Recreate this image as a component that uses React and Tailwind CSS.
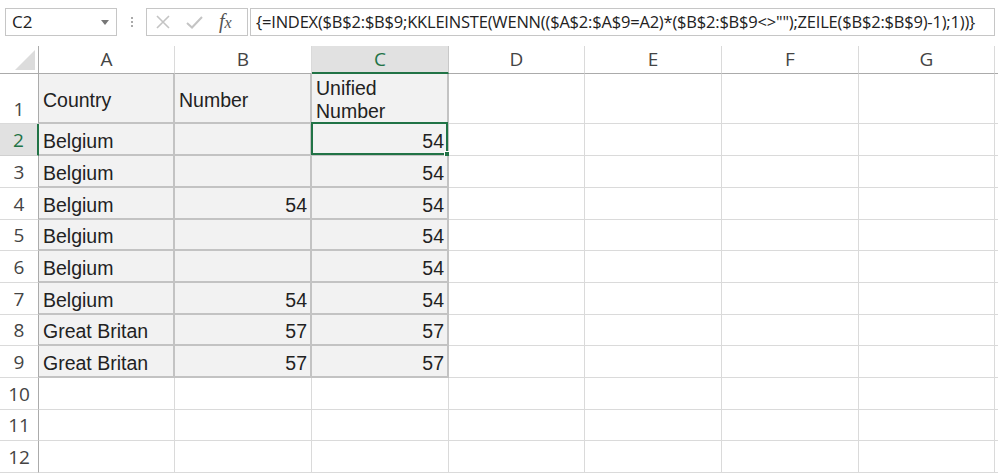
import React from 'react';

const COLS = ['A', 'B', 'C', 'D', 'E', 'F', 'G'];
const WIDTHS = [136, 137, 137, 136, 137, 137, 136];

const rows = [
  { n: 1, h: 50, cells: ['Country', 'Number', 'Unified Number'] },
  { n: 2, h: 32, cells: ['Belgium', '', '54'] },
  { n: 3, h: 32, cells: ['Belgium', '', '54'] },
  { n: 4, h: 32, cells: ['Belgium', '54', '54'] },
  { n: 5, h: 31, cells: ['Belgium', '', '54'] },
  { n: 6, h: 32, cells: ['Belgium', '', '54'] },
  { n: 7, h: 32, cells: ['Belgium', '54', '54'] },
  { n: 8, h: 31, cells: ['Great Britan', '57', '57'] },
  { n: 9, h: 32, cells: ['Great Britan', '57', '57'] },
  { n: 10, h: 32, cells: [] },
  { n: 11, h: 31, cells: [] },
  { n: 12, h: 32, cells: [] },
];

const FORMULA = '{=INDEX($B$2:$B$9;KKLEINSTE(WENN(($A$2:$A$9=A2)*($B$2:$B$9<>"");ZEILE($B$2:$B$9)-1);1))}';

function FormulaBar() {
  return (
    <div className="h-[46px] flex items-start pt-[8px] bg-white" style={{ fontFamily: '"Open Sans", "Noto Sans", sans-serif' }}>
      <div className="ml-[5px] w-[112px] h-[28px] border border-[#c6c6c6] flex items-center justify-between pl-[6px] pr-[7px] text-[17px] text-[#222]">
        <span>C2</span>
        <svg width="8" height="5" viewBox="0 0 8 5"><path d="M0 0 L8 0 L4 5 Z" fill="#777" /></svg>
      </div>
      <div className="w-[29px] h-[28px] flex flex-col items-center justify-center gap-[2px]">
        <span className="w-[2px] h-[2px] bg-[#aaa]" />
        <span className="w-[2px] h-[2px] bg-[#aaa]" />
        <span className="w-[2px] h-[2px] bg-[#aaa]" />
      </div>
      <div className="w-[102px] h-[28px] border border-[#c6c6c6] flex items-center pl-[9px] gap-[16px]">
        <svg width="14" height="14" viewBox="0 0 14 14"><path d="M1 1 L13 13 M13 1 L1 13" stroke="#c4c4c4" strokeWidth="1.6" /></svg>
        <svg width="17" height="14" viewBox="0 0 17 14"><path d="M1 8 L6 12.5 L16 2" stroke="#c4c4c4" strokeWidth="2" fill="none" /></svg>
        <span className="italic text-[#555] text-[20px] leading-none -mt-[3px]" style={{ fontFamily: '"Liberation Serif", serif' }}>
          f<span className="text-[16px]">x</span>
        </span>
      </div>
      <div className="ml-[2px] w-[745px] h-[28px] border border-[#c6c6c6] flex items-center pl-[5px] text-[16.5px] text-[#222] whitespace-nowrap tracking-[-0.2px]">
        {FORMULA}
      </div>
    </div>
  );
}

function HeaderRow() {
  return (
    <div className="flex h-[28px]" style={{ fontFamily: '"Open Sans", "Noto Sans", sans-serif' }}>
      <div className="w-[39px] shrink-0 border-r border-b border-[#ababab] relative">
        <svg className="absolute right-[3px] bottom-[3px]" width="20" height="20" viewBox="0 0 20 20">
          <path d="M20 0 L20 20 L0 20 Z" fill="#dcdcdc" />
        </svg>
      </div>
      {COLS.map((c, i) => {
        const sel = c === 'C';
        return (
          <div
            key={c}
            style={{ width: WIDTHS[i] }}
            className={
              sel
                ? 'shrink-0 flex items-center justify-center bg-[#e1e1e1] text-[#217346] text-[19px] border-r border-[#c8c8c8] border-b-2 border-b-[#217346]'
                : 'shrink-0 flex items-center justify-center text-[#444] text-[19px] border-r border-[#dadada] border-b border-b-[#ababab]'
            }
          >
            {c}
          </div>
        );
      })}
      <div className="flex-1 border-b border-[#ababab]" />
    </div>
  );
}

function Row({ row }) {
  const inTable = row.n <= 9;
  const selRow = row.n === 2;
  return (
    <div className="flex" style={{ height: row.h }}>
      <div
        className={
          (selRow
            ? 'bg-[#e1e1e1] text-[#217346] border-r-2 border-r-[#217346] border-b border-b-[#d0d0d0] '
            : 'text-[#444] border-r border-r-[#ababab] border-b border-b-[#dadada] ') +
          'w-[39px] shrink-0 flex items-end justify-center text-[19px] leading-[28px] ' +
          (row.n === 1 ? 'pb-0' : 'pb-[1px]')
        }
        style={{ fontFamily: '"Open Sans", "Noto Sans", sans-serif' }}
      >
        {row.n}
      </div>
      {COLS.map((c, i) => {
        const tableCell = inTable && i < 3;
        const val = row.cells[i] || '';
        const isNum = /^\d+$/.test(val);
        const isUnified = row.n === 1 && i === 2;
        const selected = row.n === 2 && i === 2;
        return (
          <div
            key={c}
            style={{ width: WIDTHS[i], fontFamily: '"Liberation Sans", Arial, sans-serif' }}
            className={
              (tableCell
                ? 'bg-[#f2f2f2] border-r-2 border-b-2 border-[#c3c3c3] '
                : 'bg-white border-r border-b border-[#dadada] ') +
              'shrink-0 relative flex text-[19.5px] text-[#222] ' +
              (isUnified
                ? 'items-start pt-[3px] pl-[4px] leading-[23px]'
                : isNum
                ? 'items-center justify-end pr-[3px] pt-[5px]'
                : 'items-center pl-[4px] pt-[5px]')
            }
          >
            {isUnified ? (
              <span>
                Unified
                <br />
                Number
              </span>
            ) : (
              val
            )}
            {selected && (
              <>
                <div className="absolute -left-[1px] -top-[2px] -right-[1px] -bottom-[1px] border-2 border-[#217346] pointer-events-none" />
                <div className="absolute -right-[3px] -bottom-[3px] w-[6px] h-[6px] bg-[#217346] border border-white" />
              </>
            )}
          </div>
        );
      })}
      <div className="flex-1 border-b border-[#dadada]" />
    </div>
  );
}

export default function App() {
  return (
    <div className="w-[998px] h-[474px] overflow-hidden bg-white">
      <FormulaBar />
      <HeaderRow />
      {rows.map((r) => (
        <Row key={r.n} row={r} />
      ))}
    </div>
  );
}
